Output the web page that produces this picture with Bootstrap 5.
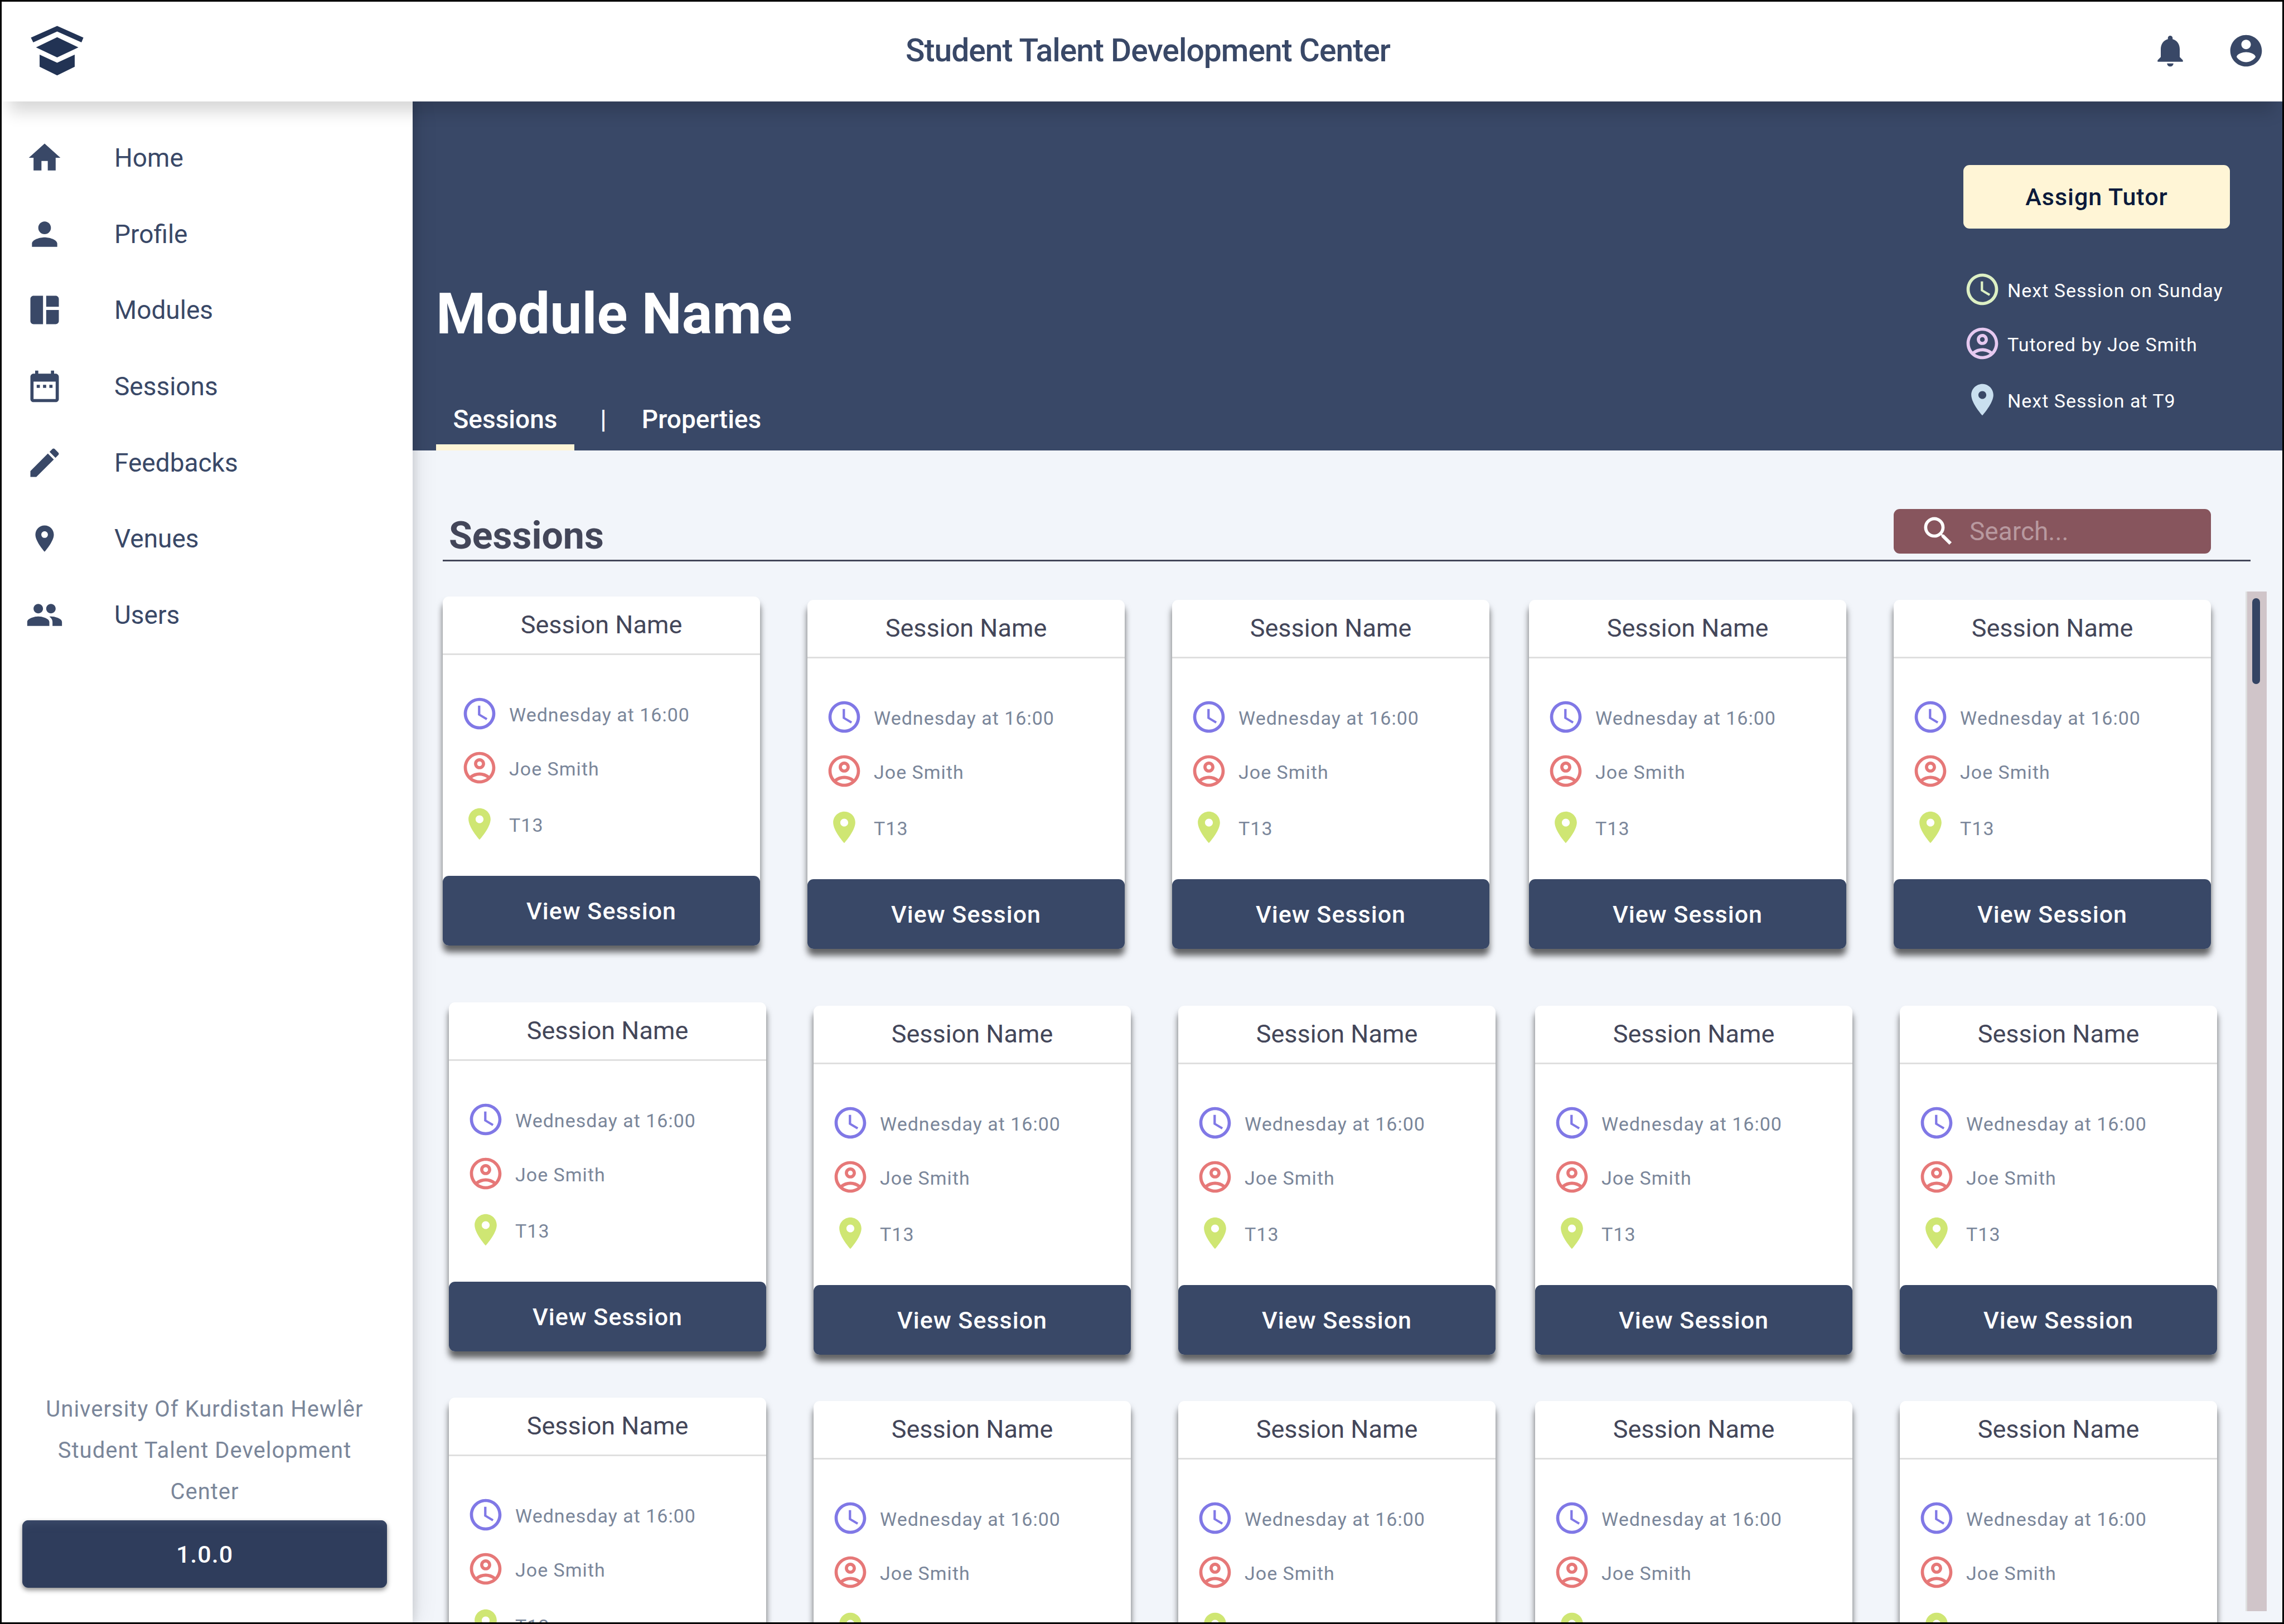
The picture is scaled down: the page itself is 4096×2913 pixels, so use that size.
<!DOCTYPE html>
<html lang="en">
<head>
<meta charset="utf-8">
<meta name="viewport" content="width=device-width, initial-scale=1">
<title>Student Talent Development Center</title>
<link href="https://cdn.jsdelivr.net/npm/bootstrap@5.3.0/dist/css/bootstrap.min.css" rel="stylesheet">
<style>
:root{--navy:#394867;--ink:#434659;--slate:#7a869a;--cream:#fff5d6}
body{font-family:Roboto,"Liberation Sans",sans-serif;background:#f2f5fa;color:var(--navy);font-size:46px;line-height:54px}
svg{display:block;flex:none;fill:currentColor}
.ico{width:68px;height:68px}
.app-frame{height:100vh;overflow:hidden;border:3px solid #000}
.topbar{height:179px;padding:0 31px 3px 52px;z-index:3;box-shadow:0 32px 28px -14px rgba(0,0,0,.16)}
.topbar-title{font-size:57px;line-height:66px;font-weight:500;letter-spacing:-1px}
.topbar-side{flex:1 1 0}
.topbar-actions{gap:68px}
.logo{color:#223354}
.icon-btn{border:0;background:none;padding:0;color:inherit}
.sidebar{width:737px;z-index:2;padding-top:33px;padding-bottom:62px;box-shadow:6px 0 12px rgba(0,0,0,.08),4px 0 40px rgba(0,0,0,.1)}
.side-nav{height:956px}
.side-link{flex:1 1 0;padding-left:43px;gap:91px;color:var(--navy);text-decoration:none}
.side-foot{padding:0 46px 0 37px}
.side-note{font-size:40px;line-height:74px;color:var(--slate);letter-spacing:1px;margin-bottom:14px}
.btn-app{--bs-btn-border-width:0;--bs-btn-border-radius:11px;--bs-btn-padding-y:0;font-size:43px;line-height:50px;font-weight:500;letter-spacing:1px}
.btn-version{height:121px;background:#2f3d5c;color:#fff;box-shadow:inset 0 12px 14px -6px #3b4a69,0 4px 8px rgba(0,0,0,.45)}
.banner{height:626px;background:var(--navy);color:#fff;padding-left:42px;padding-right:94px}
.banner-title{font-size:102px;line-height:120px;font-weight:700;margin:0 0 93px}
.tab-link{color:#fff;font-weight:500;width:248px;height:92px;padding-top:9px;text-decoration:none;text-align:center}
.tab-link.active{border-bottom:11px solid var(--cream)}
.tab-rule{padding-top:9px;font-weight:500;width:104px;text-align:center}
.banner-info{width:478px;padding-top:114px}
.btn-assign{height:114px;background:var(--cream);color:#0b1a3b;margin-bottom:75px}
.fact{font-size:34px;line-height:40px;letter-spacing:1px;gap:11px;height:68px;margin-bottom:29px}
.fact span{padding-top:4px}
.fact:nth-of-type(2){margin-bottom:33px}
.section-head{margin:0 57px 0 54px;height:199px;padding:0 71px 11px 11px;border-bottom:3px solid var(--ink)}
.section-title{font-size:68px;line-height:64px;font-weight:700;color:var(--ink);margin:0}
.search-box{width:569px;height:80px;border-radius:11px;background:#87555d;color:#fff;padding:0 46px;gap:22px}
.search-box input{border:0;background:none;outline:0;padding:0;width:100%;min-width:0;color:#fff}
.search-box input::placeholder{color:#b8999f;opacity:1}
.list-area{padding-left:54px;padding-right:28px;padding-top:54px}
.session-list{flex:1 1 0;min-width:0;padding-top:9px;margin-right:51px}
.session-row{padding-right:11px;height:728px}
.session-row+.session-row{padding-left:11px;padding-right:0}
.session-row:nth-child(2){height:709px}
.session{flex:1 1 0;height:626px;margin-top:6px;background:#fff;border-radius:11px;box-shadow:0 12px 12px rgba(0,0,0,.6)}
.session:first-child{margin-top:0}
.session+.session{margin-left:85px}
.session:nth-child(4){margin-left:71px}
.session-name{font-size:45px;line-height:54px;font-weight:400;color:var(--ink);height:105px;padding-top:24px;margin:0;border-bottom:3px solid #dfdfdf}
.session-facts{padding:71px 32px 0}
.session-facts .fact{color:var(--slate);gap:19px}
.btn-view{height:125px;background:var(--navy);color:#fff}
.c-time{color:#8078e6}.c-person{color:#e67878}.c-place{color:#cfe673}
.b-time{color:#ddf0c4}.b-person{color:#e6c9f0}.b-place{color:#c9dfef}
.track{width:38px;background:#d0c5c9;border-left:3px solid #dfe0e0;padding:12px 9px;margin-bottom:20px}
.thumb{height:154px;width:14px;border-radius:7px;background:#344463}
</style>
</head>
<body>
<svg width="0" height="0" class="position-absolute" aria-hidden="true">
<symbol id="i-clock" viewBox="0 0 24 24"><path d="M11.99 2C6.47 2 2 6.48 2 12s4.47 10 9.99 10C17.52 22 22 17.52 22 12S17.52 2 11.99 2zM12 20c-4.42 0-8-3.58-8-8s3.58-8 8-8 8 3.58 8 8-3.58 8-8 8zm.5-13H11v6l5.25 3.15.75-1.23-4.5-2.67z"/></symbol>
<symbol id="i-user" viewBox="0 0 24 24"><path d="M12 2C6.48 2 2 6.48 2 12s4.48 10 10 10 10-4.48 10-10S17.52 2 12 2zM7.35 18.5C8.66 17.56 10.26 17 12 17s3.34.56 4.65 1.5C15.34 19.44 13.74 20 12 20s-3.34-.56-4.65-1.5zm10.79-1.38C16.45 15.8 14.32 15 12 15s-4.45.8-6.14 2.12C4.7 15.73 4 13.95 4 12c0-4.42 3.58-8 8-8s8 3.58 8 8c0 1.95-.7 3.73-1.86 5.12zM12 6c-1.93 0-3.5 1.57-3.5 3.5S10.07 13 12 13s3.5-1.57 3.5-3.5S13.93 6 12 6zm0 5c-.83 0-1.5-.67-1.5-1.5S11.17 8 12 8s1.5.67 1.5 1.5S12.83 11 12 11z"/></symbol>
<symbol id="i-pin" viewBox="0 0 24 24"><path d="M12 2C8.13 2 5 5.13 5 9c0 5.25 7 13 7 13s7-7.75 7-13c0-3.87-3.13-7-7-7zm0 9.5c-1.38 0-2.5-1.12-2.5-2.5s1.12-2.5 2.5-2.5 2.5 1.12 2.5 2.5-1.12 2.5-2.5 2.5z"/></symbol>
</svg>
<div class="app-frame d-flex flex-column">
<header class="topbar bg-white d-flex align-items-center position-relative flex-shrink-0">
  <div class="topbar-side d-flex"><a class="logo" href="#" aria-label="Center home"><svg width="95" height="90" viewBox="77 66 134 127"><path d="M144 66.7 210.5 96.5 205.5 108.4 144 80.8 83.5 108.4 77.5 96.5zM144 95.4 197.8 120.9 144 146.4 90.5 120.9zM99.6 139.3 144 160 188.4 139.3V170.2L144 191.9 99.6 170.2z"/></svg></a></div>
  <div class="topbar-title">Student Talent Development Center</div>
  <div class="topbar-side topbar-actions d-flex justify-content-end">
    <button class="icon-btn" type="button" aria-label="Notifications"><svg class="ico" viewBox="0 0 24 24"><path d="M12 22c1.1 0 2-.9 2-2h-4c0 1.1.89 2 2 2zm6-6v-5c0-3.07-1.64-5.64-4.5-6.32V4c0-.83-.67-1.5-1.5-1.5s-1.5.67-1.5 1.5v.68C7.63 5.36 6 7.92 6 11v5l-2 2v1h16v-1l-2-2z"/></svg></button>
    <button class="icon-btn" type="button" aria-label="Account"><svg class="ico" viewBox="0 0 24 24"><path d="M12 2C6.48 2 2 6.48 2 12s4.48 10 10 10 10-4.48 10-10S17.52 2 12 2zm0 3c1.66 0 3 1.34 3 3s-1.34 3-3 3-3-1.34-3-3 1.34-3 3-3zm0 14.2c-2.5 0-4.71-1.28-6-3.22.03-1.99 4-3.08 6-3.08 1.99 0 5.97 1.09 6 3.08-1.29 1.94-3.5 3.22-6 3.22z"/></svg></button>
  </div>
</header>
<div class="d-flex flex-grow-1 overflow-hidden">
<aside class="sidebar bg-white d-flex flex-column position-relative flex-shrink-0">
  <nav class="side-nav d-flex flex-column" aria-label="Main">
    <a class="side-link d-flex align-items-center" href="#"><svg class="ico" viewBox="0 0 24 24"><path d="M10 20v-6h4v6h5v-8h3L12 3 2 12h3v8z"/></svg>Home</a>
    <a class="side-link d-flex align-items-center" href="#"><svg class="ico" viewBox="0 0 24 24"><path d="M12 12c2.21 0 4-1.79 4-4s-1.79-4-4-4-4 1.79-4 4 1.79 4 4 4zm0 2c-2.67 0-8 1.34-8 4v2h16v-2c0-2.66-5.33-4-8-4z"/></svg>Profile</a>
    <a class="side-link d-flex align-items-center" href="#"><svg class="ico" viewBox="0 0 24 24"><path d="M11 21H5c-1.1 0-2-.9-2-2V5c0-1.1.9-2 2-2h6v18zm2 0h6c1.1 0 2-.9 2-2v-7h-8v9zm8-11V5c0-1.1-.9-2-2-2h-6v7h8z"/></svg>Modules</a>
    <a class="side-link d-flex align-items-center" href="#"><svg class="ico" viewBox="0 0 24 24"><path d="M9 11H7v2h2v-2zm4 0h-2v2h2v-2zm4 0h-2v2h2v-2zm2-7h-1V2h-2v2H8V2H6v2H5c-1.11 0-1.99.9-1.99 2L3 20c0 1.1.89 2 2 2h14c1.1 0 2-.9 2-2V6c0-1.1-.9-2-2-2zm0 16H5V9h14v11z"/></svg>Sessions</a>
    <a class="side-link d-flex align-items-center" href="#"><svg class="ico" viewBox="0 0 24 24"><path d="M3 17.25V21h3.75L17.81 9.94l-3.75-3.75L3 17.25zM20.71 7.04c.39-.39.39-1.02 0-1.41l-2.34-2.34c-.39-.39-1.02-.39-1.41 0l-1.83 1.83 3.75 3.75 1.83-1.83z"/></svg>Feedbacks</a>
    <a class="side-link d-flex align-items-center" href="#"><svg class="ico" viewBox="-2.4 -2.4 28.8 28.8"><path d="M12 2C8.13 2 5 5.13 5 9c0 5.25 7 13 7 13s7-7.75 7-13c0-3.87-3.13-7-7-7zm0 9.5c-1.38 0-2.5-1.12-2.5-2.5s1.12-2.5 2.5-2.5 2.5 1.12 2.5 2.5-1.12 2.5-2.5 2.5z"/></svg>Venues</a>
    <a class="side-link d-flex align-items-center" href="#"><svg class="ico" viewBox="0 0 24 24"><path d="M16 11c1.66 0 2.99-1.34 2.99-3S17.66 5 16 5c-1.66 0-3 1.34-3 3s1.34 3 3 3zm-8 0c1.66 0 2.99-1.34 2.99-3S9.66 5 8 5C6.34 5 5 6.34 5 8s1.34 3 3 3zm0 2c-2.33 0-7 1.17-7 3.5V19h14v-2.5c0-2.33-4.67-3.5-7-3.5zm8 0c-.29 0-.62.02-.97.05 1.16.84 1.97 1.97 1.97 3.45V19h6v-2.5c0-2.33-4.67-3.5-7-3.5z"/></svg>Users</a>
  </nav>
  <div class="side-foot mt-auto text-center">
    <p class="side-note">University Of Kurdistan Hewlêr<br>Student Talent Development<br>Center</p>
    <button class="btn btn-app btn-version w-100" type="button">1.0.0</button>
  </div>
</aside>
<main class="flex-grow-1 d-flex flex-column overflow-hidden">
  <section class="banner d-flex justify-content-between flex-shrink-0">
    <div class="d-flex flex-column justify-content-end">
      <h1 class="banner-title">Module Name</h1>
      <nav class="d-flex" aria-label="Module">
        <a class="tab-link active" href="#">Sessions</a><span class="tab-rule">|</span><a class="tab-link" href="#">Properties</a>
      </nav>
    </div>
    <div class="banner-info">
      <button class="btn btn-app btn-assign w-100" type="button">Assign Tutor</button>
      <div class="fact d-flex align-items-center"><svg class="ico b-time"><use href="#i-clock"/></svg><span>Next Session on Sunday</span></div>
      <div class="fact d-flex align-items-center"><svg class="ico b-person"><use href="#i-user"/></svg><span>Tutored by Joe Smith</span></div>
      <div class="fact d-flex align-items-center"><svg class="ico b-place"><use href="#i-pin"/></svg><span>Next Session at T9</span></div>
    </div>
  </section>
  <div class="section-head d-flex justify-content-between align-items-end flex-shrink-0">
    <h2 class="section-title">Sessions</h2>
    <label class="search-box d-flex align-items-center"><svg class="ico" viewBox="0 0 24 24"><path d="M15.5 14h-.79l-.28-.27A6.471 6.471 0 0 0 16 9.5 6.5 6.5 0 1 0 9.5 16c1.61 0 3.09-.59 4.23-1.57l.27.28v.79l5 4.99L20.49 19l-4.99-5zm-6 0C7.01 14 5 11.99 5 9.5S7.01 5 9.5 5 14 7.01 14 9.5 11.99 14 9.5 14z"/></svg><input type="search" aria-label="Search sessions" placeholder="Search..."></label>
  </div>
  <div class="list-area d-flex flex-grow-1 overflow-hidden">
    <div class="session-list" id="sessions"></div>
    <div class="track"><div class="thumb"></div></div>
  </div>
</main>
</div>
</div>
<template id="session-card">
<article class="session d-flex flex-column">
  <h3 class="session-name text-center">Session Name</h3>
  <div class="session-facts">
    <div class="fact d-flex align-items-center"><svg class="ico c-time"><use href="#i-clock"/></svg><span>Wednesday at 16:00</span></div>
    <div class="fact d-flex align-items-center"><svg class="ico c-person"><use href="#i-user"/></svg><span>Joe Smith</span></div>
    <div class="fact d-flex align-items-center"><svg class="ico c-place"><use href="#i-pin"/></svg><span>T13</span></div>
  </div>
  <button class="btn btn-app btn-view w-100 mt-auto" type="button">View Session</button>
</article>
</template>
<script>
const list = document.getElementById('sessions');
const card = document.getElementById('session-card');
for (let r = 0; r < 3; r++) {
  const row = document.createElement('div');
  row.className = 'session-row d-flex';
  for (let c = 0; c < 5; c++) row.append(card.content.cloneNode(true));
  list.append(row);
}
</script>
<script src="https://cdn.jsdelivr.net/npm/bootstrap@5.3.0/dist/js/bootstrap.bundle.min.js"></script>
</body>
</html>
